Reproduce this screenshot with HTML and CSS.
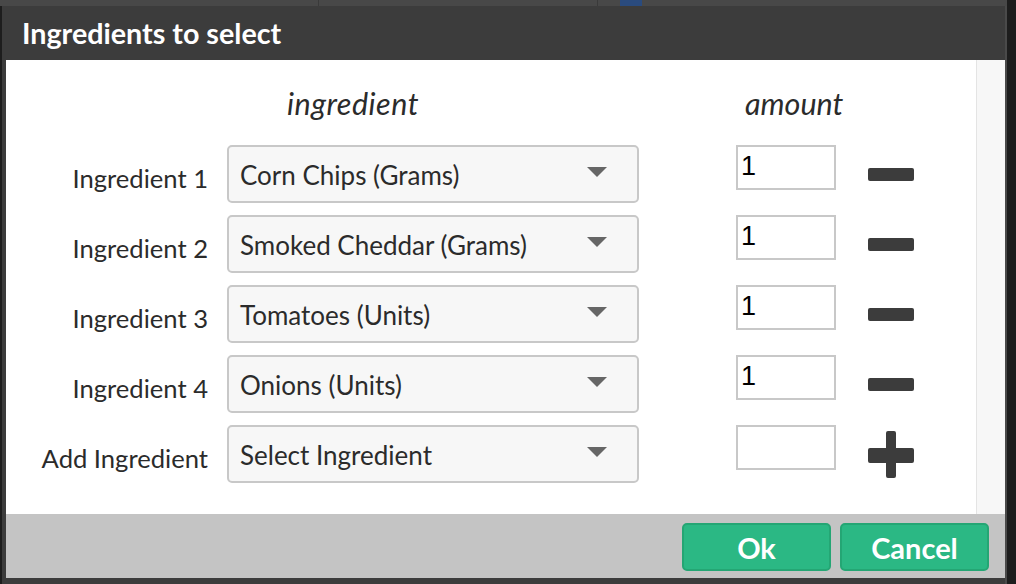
FILE: index.html
```
<!DOCTYPE html>
<html>
<head>
<meta charset="utf-8">
<link rel="stylesheet" href="styles.css">
</head>
<body>
<div class="behind">
  <span class="behind-box"></span>
  <span class="behind-flag"></span>
</div>
<div class="dialog">
  <div class="titlebar">Ingredients to select</div>
  <div class="body">
    <div class="content">
      <div class="grid">
        <div class="head head-ing">ingredient</div>
        <div class="head head-amt">amount</div>

        <div class="label">Ingredient 1</div>
        <div class="select"><span>Corn Chips (Grams)</span><svg class="caret" width="20" height="10" viewBox="0 0 20 10"><path d="M0 0H20L10 10Z" fill="#666"/></svg></div>
        <div class="amount"><input class="num" type="text" value="1"></div>
        <div class="action"><span class="minus"></span></div>

        <div class="label">Ingredient 2</div>
        <div class="select"><span>Smoked Cheddar (Grams)</span><svg class="caret" width="20" height="10" viewBox="0 0 20 10"><path d="M0 0H20L10 10Z" fill="#666"/></svg></div>
        <div class="amount"><input class="num" type="text" value="1"></div>
        <div class="action"><span class="minus"></span></div>

        <div class="label">Ingredient 3</div>
        <div class="select"><span>Tomatoes (Units)</span><svg class="caret" width="20" height="10" viewBox="0 0 20 10"><path d="M0 0H20L10 10Z" fill="#666"/></svg></div>
        <div class="amount"><input class="num" type="text" value="1"></div>
        <div class="action"><span class="minus"></span></div>

        <div class="label">Ingredient 4</div>
        <div class="select"><span>Onions (Units)</span><svg class="caret" width="20" height="10" viewBox="0 0 20 10"><path d="M0 0H20L10 10Z" fill="#666"/></svg></div>
        <div class="amount"><input class="num" type="text" value="1"></div>
        <div class="action"><span class="minus"></span></div>

        <div class="label">Add Ingredient</div>
        <div class="select"><span>Select Ingredient</span><svg class="caret" width="20" height="10" viewBox="0 0 20 10"><path d="M0 0H20L10 10Z" fill="#666"/></svg></div>
        <div class="amount"><input class="num" type="text" value=""></div>
        <div class="action"><svg class="plus" width="46" height="47" viewBox="0 0 46 47"><path d="M18 2Q18 0 20 0H26Q28 0 28 2V17H44Q46 17 46 19V30Q46 32 44 32H28V45Q28 47 26 47H20Q18 47 18 45V32H2Q0 32 0 30V19Q0 17 2 17H18Z" fill="#3c3c3c"/></svg></div>
      </div>
    </div>
    <div class="scroll"></div>
  </div>
  <div class="footer">
    <button class="btn">Ok</button>
    <button class="btn">Cancel</button>
  </div>
</div>
</body>
</html>
```
FILE: styles.css
```
* { box-sizing: border-box; }
html, body { margin: 0; padding: 0; }
body {
  width: 1016px;
  height: 584px;
  overflow: hidden;
  background: #1d1d1d;
  font-family: Lato, "Open Sans", sans-serif;
}
.behind {
  height: 6px;
  background: #484848;
  overflow: hidden;
  display: flex;
  width: 1007px;
}
.behind-box {
  width: 280px;
  height: 6px;
  margin-left: 318px;
  border-left: 1px solid #3a3a3a;
  border-right: 1px solid #3a3a3a;
}
.behind-flag {
  width: 22px;
  height: 6px;
  margin-left: 22px;
  background: #2a4b7e;
}

.dialog {
  margin-left: 2px;
  width: 1005px;
  height: 578px;
  background: #3c3c3c;
  border-right: 2px solid #4a4a4a;
}
.titlebar {
  height: 54px;
  padding-left: 20px;
  color: #fff;
  font-weight: 700;
  font-size: 28.7px;
  line-height: 55px;
}
.body {
  margin-left: 4px;
  width: 999px;
  height: 454px;
  display: flex;
}
.content {
  flex: 1;
  background: #fff;
  padding-top: 26px;
}
.scroll {
  width: 29px;
  background: #f7f7f7;
  border-left: 1px solid #e4e4e4;
}
.grid {
  display: grid;
  grid-template-columns: 221px 509px 132px 46px;
  grid-template-rows: 47px;
  grid-auto-rows: 58px;
  row-gap: 12px;
}
.head {
  font-style: italic;
  font-size: 30.5px;
  line-height: 34px;
  color: #2b2b2b;
  height: 34px;
  align-self: start;
}
.head-ing { grid-column: 2; margin-left: 60px; letter-spacing: 0.5px; }
.head-amt { grid-column: 3; margin-left: 9px; }

.label {
  grid-column: 1;
  text-align: right;
  padding-right: 19px;
  font-size: 25.6px;
  color: #2b2b2b;
  align-self: center;
  padding-top: 8px;
  white-space: nowrap;
}
.select {
  grid-column: 2;
  width: 412px;
  height: 58px;
  background: #f7f7f7;
  border: 2px solid #c8c8c8;
  border-radius: 5px;
  display: flex;
  align-items: center;
  justify-content: space-between;
  padding: 1px 30px 0 11px;
  font-size: 26px;
  color: #2b2b2b;
}
.caret { margin-top: -6px; }
.amount { grid-column: 3; }
.num {
  display: block;
  width: 100px;
  height: 45px;
  border: 2px solid #c8c8c8;
  border-radius: 0;
  padding: 0 0 3px 3px;
  font-family: "Liberation Sans", Arial, sans-serif;
  font-size: 27px;
  color: #000;
  background: #fff;
  outline: none;
  margin: 0;
}
.action {
  grid-column: 4;
  display: flex;
  align-items: center;
}
.minus {
  display: block;
  width: 46px;
  height: 13px;
  background: #3c3c3c;
  border-radius: 2px;
}
.plus { display: block; }

.footer {
  margin-left: 4px;
  width: 999px;
  height: 64px;
  background: #c4c4c4;
  display: flex;
  justify-content: flex-end;
  align-items: flex-start;
  padding: 9px 16px 0 0;
  gap: 9px;
}
.btn {
  width: 149px;
  height: 48px;
  background: #2bb884;
  border: 2px solid #24a674;
  border-radius: 5px;
  color: #fff;
  font-family: Lato, sans-serif;
  font-weight: 700;
  font-size: 29px;
  padding: 0;
  margin: 0;
}
```
